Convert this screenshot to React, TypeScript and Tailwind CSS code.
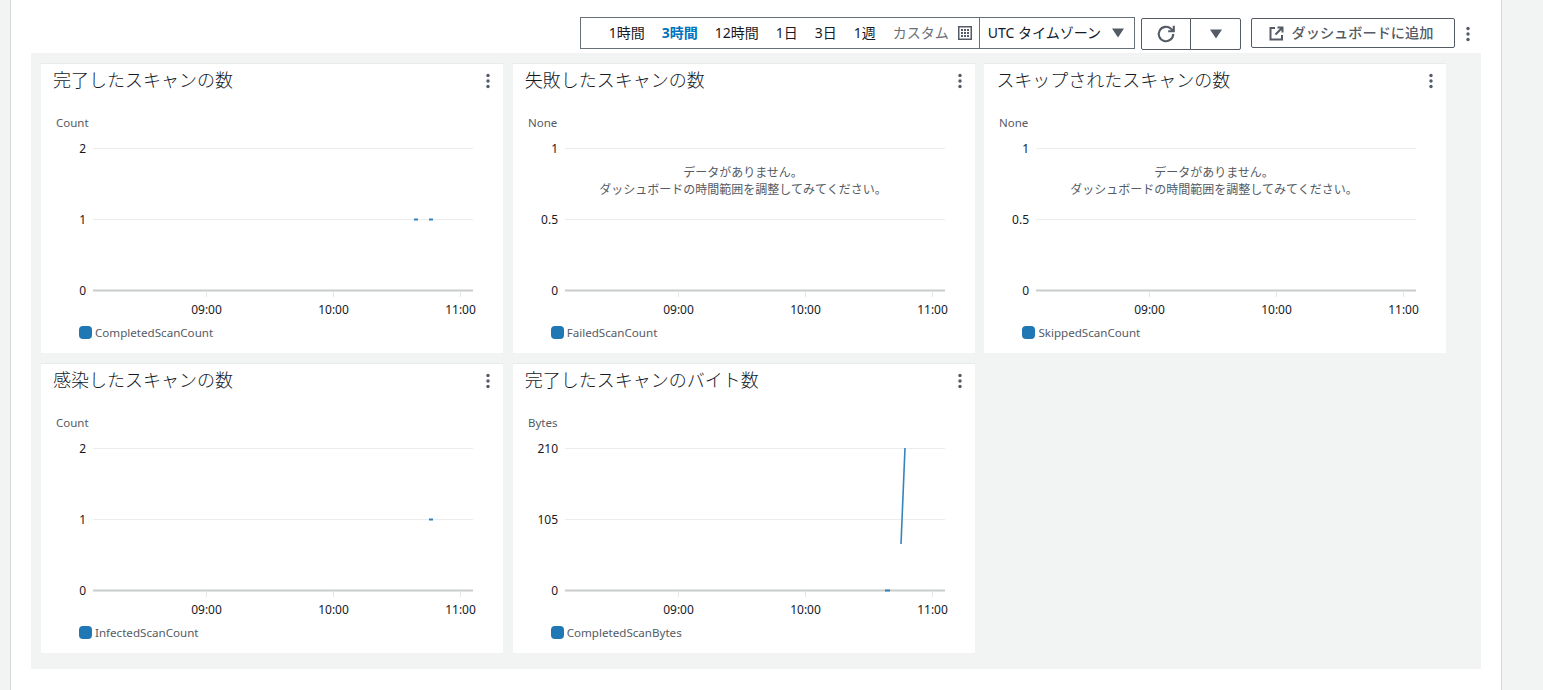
import React from "react";

type Mark = { x1: number; y1: number; x2: number; y2: number; w?: number };
type ChartProps = {
  title: string;
  unit: string;
  ticks: string[];
  legend: string;
  marks?: Mark[];
  empty?: boolean;
};

const Kebab = ({ color = "#545b64" }: { color?: string }) => (
  <svg width="4" height="16" viewBox="0 0 4 16" aria-hidden="true">
    <circle cx="2" cy="2.5" r="1.7" fill={color} />
    <circle cx="2" cy="8" r="1.7" fill={color} />
    <circle cx="2" cy="13.5" r="1.7" fill={color} />
  </svg>
);

const Caret = () => (
  <svg width="12" height="10" viewBox="0 0 12 10" aria-hidden="true">
    <path d="M0 0.5h12L6 9.5z" fill="#545b64" />
  </svg>
);

const Card = ({ title, unit, ticks, legend, marks = [], empty }: ChartProps) => {
  const ys = [85, 156, 227];
  const xs = [165, 292, 419];
  return (
    <div className="flex h-[289px] flex-col bg-white shadow-[0_-1px_0_#e9ebeb]">
      <div className="flex h-[30px] items-center justify-between pl-3 pr-[13px] pt-[1px]">
        <h2 className="text-[18px] font-light leading-[30px] text-[#16191f]">{title}</h2>
        <span className="mt-[3px] flex">
          <Kebab />
        </span>
      </div>
      <svg width="462" height="231" viewBox="0 31 462 231" className="block">
        <text x="15" y="64" fontSize="11.5" fill="#545b64">{unit}</text>
        {ys.slice(0, 2).map((y) => (
          <line key={y} x1="52" x2="432" y1={y + 0.5} y2={y + 0.5} stroke="#eaeded" strokeWidth="1" />
        ))}
        <line x1="52" x2="432" y1={227.5} y2={227.5} stroke="#c9cccc" strokeWidth="2" />
        {xs.map((x) => (
          <line key={x} x1={x + 0.5} x2={x + 0.5} y1="228" y2="234" stroke="#e6e8e8" strokeWidth="1" />
        ))}
        {ticks.map((t, i) => (
          <text key={t} x="45" y={ys[i] + 4.5} fontSize="12" textAnchor="end" fill="#16191f">{t}</text>
        ))}
        {["09:00", "10:00", "11:00"].map((t, i) => (
          <text key={t} x={xs[i] + 0.5} y="250.5" fontSize="12" textAnchor="middle" fill="#16191f">{t}</text>
        ))}
        {marks.map((m, i) => (
          <line key={i} x1={m.x1} y1={m.y1} x2={m.x2} y2={m.y2} stroke="#1f77b4" strokeOpacity="0.9" strokeWidth={m.w ?? 2} />
        ))}
        {empty && (
          <>
            <text x="230" y="114" fontSize="12" textAnchor="middle" fill="#545b64">データがありません。</text>
            <text x="230" y="131" fontSize="12" textAnchor="middle" fill="#545b64">ダッシュボードの時間範囲を調整してみてください。</text>
          </>
        )}
      </svg>
      <div className="flex h-[15px] items-center gap-[3px] pl-[38px]">
        <span className="h-[13px] w-[13px] rounded-[4px] bg-[#1f77b4]" />
        <span className="text-[11.6px] leading-[15px] text-[#545b64]">{legend}</span>
      </div>
    </div>
  );
};

const ranges = ["1時間", "3時間", "12時間", "1日", "3日", "1週"];

export default function App() {
  return (
    <div
      className="flex h-[690px] w-full overflow-hidden bg-[#f2f3f3] text-[#16191f]"
      style={{ fontFamily: '"Noto Sans", "Noto Sans CJK JP", sans-serif' }}
    >
      <div className="w-[10px] shrink-0" />
      <main className="flex h-full w-[1492px] shrink-0 flex-col border-x border-[#d5dbdb] bg-white px-5 pt-[17px]">
        <div className="flex h-[36px] items-start justify-end">
          <div className="flex h-[32px] items-center border border-[#687078] text-[14px] leading-[20px]">
            <div className="flex items-center gap-[17px] pl-[28px] pr-[7px]">
              {ranges.map((r) => (
                <span key={r} className={r === "3時間" ? "font-bold text-[#0073bb]" : ""}>{r}</span>
              ))}
              <span className="flex items-center gap-[9px] text-[#687078]">
                カスタム
                <svg width="14" height="14" viewBox="0 0 14 14" aria-hidden="true">
                  <path fillRule="evenodd" clipRule="evenodd" fill="#545b64" d="M0 0h14v14H0zM1.500 1.500v11h11v-11zM3 3h2v2H3zM6 3h2v2H6zM9 3h2v2H9zM3 6h2v2H3zM6 6h2v2H6zM9 6h2v2H9zM3 9h2v2H3zM6 9h2v2H6zM9 9h2v2H9z" />
                </svg>
              </span>
            </div>
            <div className="flex h-full items-center gap-[11px] border-l border-[#687078] pl-2 pr-[10px]">
              <span>UTC タイムゾーン</span>
              <Caret />
            </div>
          </div>
          <div className="ml-[6px] mt-[1px] flex h-[32px]">
            <button className="flex w-[50px] items-center justify-center rounded-l-[2px] border border-[#545b64] bg-white">
              <svg width="20" height="20" viewBox="0 0 18 18" fill="none" stroke="#545b64" strokeWidth="1.900" aria-hidden="true">
                <path d="M15.500 9a6.500 6.500 0 1 1-2-4.700L16 6.500" />
                <path d="M16 1.500v5h-5" />
              </svg>
            </button>
            <button className="-ml-px flex w-[51px] items-center justify-center rounded-r-[2px] border border-[#545b64] bg-white">
              <Caret />
            </button>
          </div>
          <button className="ml-[10px] mt-[1px] flex h-[30px] w-[204px] items-center justify-center gap-[8px] rounded-[2px] border border-[#545b64] bg-white pr-[4px] text-[14.2px] font-medium text-[#545b64]">
            <svg width="15" height="15" viewBox="0 0 15 15" fill="none" stroke="#545b64" strokeWidth="2" aria-hidden="true">
              <path d="M6 2H1.500v11.500h11.500V9" />
              <path d="M8.500 1.500h5v5M13.500 1.500L6.500 8.500" />
            </svg>
            ダッシュボードに追加
          </button>
          <div className="ml-[11px] mr-[11px] mt-[9px] flex">
            <Kebab />
          </div>
        </div>
        <div className="h-[616px] bg-[#f2f3f3] pl-[10px] pt-[11px]">
          <div className="grid grid-cols-[repeat(3,462px)] gap-x-[9.7px] gap-y-[11px]">
            <Card
              title="完了したスキャンの数"
              unit="Count"
              ticks={["2", "1", "0"]}
              legend="CompletedScanCount"
              marks={[
                { x1: 373, y1: 156.5, x2: 377, y2: 156.5 },
                { x1: 388, y1: 156.5, x2: 392, y2: 156.5 },
              ]}
            />
            <Card title="失敗したスキャンの数" unit="None" ticks={["1", "0.5", "0"]} legend="FailedScanCount" empty />
            <Card title="スキップされたスキャンの数" unit="None" ticks={["1", "0.5", "0"]} legend="SkippedScanCount" empty />
            <Card
              title="感染したスキャンの数"
              unit="Count"
              ticks={["2", "1", "0"]}
              legend="InfectedScanCount"
              marks={[{ x1: 388, y1: 156.5, x2: 392, y2: 156.5 }]}
            />
            <Card
              title="完了したスキャンのバイト数"
              unit="Bytes"
              ticks={["210", "105", "0"]}
              legend="CompletedScanBytes"
              marks={[
                { x1: 392, y1: 85, x2: 388, y2: 181, w: 1.6 },
                { x1: 372, y1: 227.5, x2: 377, y2: 227.5 },
              ]}
            />
          </div>
        </div>
      </main>
      <div className="flex-1" />
    </div>
  );
}
